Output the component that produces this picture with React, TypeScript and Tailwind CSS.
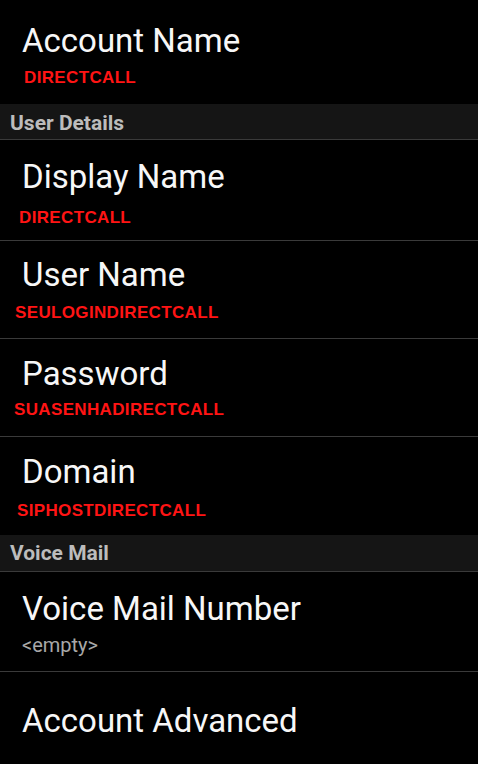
import React from "react";

const roboto = { fontFamily: "Roboto, 'Noto Sans', sans-serif" };

function Title({ text, pt }: { text: string; pt: string }) {
  return (
    <div className={`pl-[22px] text-[33px] leading-[33px] text-[#f7f7f7] ${pt}`} style={roboto}>
      {text}
    </div>
  );
}

function Sub({ text, cls }: { text: string; cls: string }) {
  return (
    <div
      className={`text-[17px] leading-[17px] font-bold text-[#ff1414] tracking-[0.35px] ${cls}`}
      style={{ fontFamily: "'Liberation Sans', Arial, sans-serif" }}
    >
      {text}
    </div>
  );
}

function Header({ text, cls }: { text: string; cls: string }) {
  return (
    <div
      className={`bg-[#151515] border-b border-[#3a3a3a] pl-[10px] text-[21px] leading-[21px] font-bold text-[#bcbcbc] ${cls}`}
      style={roboto}
    >
      {text}
    </div>
  );
}

export default function App() {
  return (
    <div className="w-[478px] h-[764px] bg-black overflow-hidden">
      <div className="h-[104px]">
        <Title text="Account Name" pt="pt-[24px]" />
        <Sub text="DIRECTCALL" cls="mt-[12px] pl-[24px]" />
      </div>
      <Header text="User Details" cls="h-[36px] pt-[9px]" />
      <div className="h-[101px] border-b border-[#3a3a3a]">
        <Title text="Display Name" pt="pt-[20px]" />
        <Sub text="DIRECTCALL" cls="mt-[16px] pl-[19px]" />
      </div>
      <div className="h-[98px] border-b border-[#3a3a3a]">
        <Title text="User Name" pt="pt-[17px]" />
        <Sub text="SEULOGINDIRECTCALL" cls="mt-[13px] pl-[15px]" />
      </div>
      <div className="h-[98px] border-b border-[#3a3a3a]">
        <Title text="Password" pt="pt-[18px]" />
        <Sub text="SUASENHADIRECTCALL" cls="mt-[11px] pl-[14px]" />
      </div>
      <div className="h-[98px]">
        <Title text="Domain" pt="pt-[18px]" />
        <Sub text="SIPHOSTDIRECTCALL" cls="mt-[14px] pl-[17px]" />
      </div>
      <Header text="Voice Mail" cls="h-[37px] pt-[8px]" />
      <div className="h-[100px] border-b border-[#3a3a3a]">
        <Title text="Voice Mail Number" pt="pt-[20px]" />
        <div className="mt-[10px] pl-[22px] text-[20px] leading-[20px] text-[#a8a8a8]" style={roboto}>
          {"<empty>"}
        </div>
      </div>
      <div>
        <Title text="Account Advanced" pt="pt-[32px]" />
      </div>
    </div>
  );
}
